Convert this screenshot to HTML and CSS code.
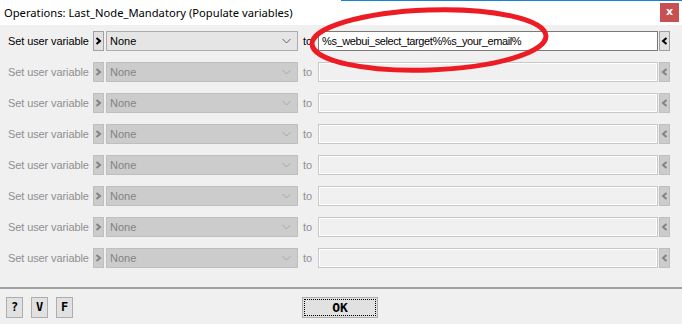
FILE: index.html
```html
<html>
	<head>
		<title>Operations: Last_Node_Mandatory</title>
<link rel="stylesheet" href="styles.css">
</head>
<body>
		<div id="WINDOW">
			<div class="titlebar">
				<span class="title">Operations: Last_Node_Mandatory (Populate variables)</span>
				<div class="close">x</div>
			</div>

			<div class="content">
				<div class="rows">
					<div class="row">
						<span class="label">Set user variable</span>
						<div class="btn-arrow"><svg width="7" height="8" viewBox="0 0 7 8"><polyline points="1.5,1 5,4 1.5,7" /></svg></div>
						<div class="combo"><span>None</span><svg class="chev" width="9" height="6" viewBox="0 0 9 6"><polyline points="0.5,1 4.5,5 8.5,1" /></svg></div>
						<span class="to">to</span>
						<div class="field">%s_webui_select_target%%s_your_email%</div>
						<div class="btn-back"><svg width="7" height="8" viewBox="0 0 7 8"><polyline points="5.5,1 2,4 5.5,7" /></svg></div>
					</div>
					<div class="row off">
						<span class="label">Set user variable</span>
						<div class="btn-arrow"><svg width="7" height="8" viewBox="0 0 7 8"><polyline points="1.5,1 5,4 1.5,7" /></svg></div>
						<div class="combo"><span>None</span><svg class="chev" width="9" height="6" viewBox="0 0 9 6"><polyline points="0.5,1 4.5,5 8.5,1" /></svg></div>
						<span class="to">to</span>
						<div class="field"></div>
						<div class="btn-back"><svg width="7" height="8" viewBox="0 0 7 8"><polyline points="5.5,1 2,4 5.5,7" /></svg></div>
					</div>
					<div class="row off">
						<span class="label">Set user variable</span>
						<div class="btn-arrow"><svg width="7" height="8" viewBox="0 0 7 8"><polyline points="1.5,1 5,4 1.5,7" /></svg></div>
						<div class="combo"><span>None</span><svg class="chev" width="9" height="6" viewBox="0 0 9 6"><polyline points="0.5,1 4.5,5 8.5,1" /></svg></div>
						<span class="to">to</span>
						<div class="field"></div>
						<div class="btn-back"><svg width="7" height="8" viewBox="0 0 7 8"><polyline points="5.5,1 2,4 5.5,7" /></svg></div>
					</div>
					<div class="row off">
						<span class="label">Set user variable</span>
						<div class="btn-arrow"><svg width="7" height="8" viewBox="0 0 7 8"><polyline points="1.5,1 5,4 1.5,7" /></svg></div>
						<div class="combo"><span>None</span><svg class="chev" width="9" height="6" viewBox="0 0 9 6"><polyline points="0.5,1 4.5,5 8.5,1" /></svg></div>
						<span class="to">to</span>
						<div class="field"></div>
						<div class="btn-back"><svg width="7" height="8" viewBox="0 0 7 8"><polyline points="5.5,1 2,4 5.5,7" /></svg></div>
					</div>
					<div class="row off">
						<span class="label">Set user variable</span>
						<div class="btn-arrow"><svg width="7" height="8" viewBox="0 0 7 8"><polyline points="1.5,1 5,4 1.5,7" /></svg></div>
						<div class="combo"><span>None</span><svg class="chev" width="9" height="6" viewBox="0 0 9 6"><polyline points="0.5,1 4.5,5 8.5,1" /></svg></div>
						<span class="to">to</span>
						<div class="field"></div>
						<div class="btn-back"><svg width="7" height="8" viewBox="0 0 7 8"><polyline points="5.5,1 2,4 5.5,7" /></svg></div>
					</div>
					<div class="row off">
						<span class="label">Set user variable</span>
						<div class="btn-arrow"><svg width="7" height="8" viewBox="0 0 7 8"><polyline points="1.5,1 5,4 1.5,7" /></svg></div>
						<div class="combo"><span>None</span><svg class="chev" width="9" height="6" viewBox="0 0 9 6"><polyline points="0.5,1 4.5,5 8.5,1" /></svg></div>
						<span class="to">to</span>
						<div class="field"></div>
						<div class="btn-back"><svg width="7" height="8" viewBox="0 0 7 8"><polyline points="5.5,1 2,4 5.5,7" /></svg></div>
					</div>
					<div class="row off">
						<span class="label">Set user variable</span>
						<div class="btn-arrow"><svg width="7" height="8" viewBox="0 0 7 8"><polyline points="1.5,1 5,4 1.5,7" /></svg></div>
						<div class="combo"><span>None</span><svg class="chev" width="9" height="6" viewBox="0 0 9 6"><polyline points="0.5,1 4.5,5 8.5,1" /></svg></div>
						<span class="to">to</span>
						<div class="field"></div>
						<div class="btn-back"><svg width="7" height="8" viewBox="0 0 7 8"><polyline points="5.5,1 2,4 5.5,7" /></svg></div>
					</div>
					<div class="row off">
						<span class="label">Set user variable</span>
						<div class="btn-arrow"><svg width="7" height="8" viewBox="0 0 7 8"><polyline points="1.5,1 5,4 1.5,7" /></svg></div>
						<div class="combo"><span>None</span><svg class="chev" width="9" height="6" viewBox="0 0 9 6"><polyline points="0.5,1 4.5,5 8.5,1" /></svg></div>
						<span class="to">to</span>
						<div class="field"></div>
						<div class="btn-back"><svg width="7" height="8" viewBox="0 0 7 8"><polyline points="5.5,1 2,4 5.5,7" /></svg></div>
					</div>
				</div>
			</div>

			<div class="separator"></div>

			<div class="footer">
				<div class="tools">
					<div class="btn-small">?</div>
					<div class="btn-small">V</div>
					<div class="btn-small">F</div>
				</div>
				<div class="btn-ok"><span>OK</span></div>
			</div>

			<!-- hand drawn red circle round the first field -->
			<svg class="scribble" width="682" height="90" viewBox="0 0 682 90">
				<ellipse cx="429" cy="40" rx="117" ry="30" transform="rotate(-2 429 40)" />
			</svg>
		</div>
	</body>
</html>
```

FILE: styles.css
```css
body{
	margin: 0;
	width: 682px;
	height: 324px;
	overflow: hidden;
	background: #f0f0f0;
	font-family: "Liberation Sans", Arial, sans-serif;
	font-size: 11px;
	color: #000;
}

#WINDOW{
	position: relative;
	width: 682px;
	height: 324px;
	background: #f0f0f0;
}

.titlebar{
	position: relative;
	height: 25px;
	background: #fff;
	display: flex;
	justify-content: space-between;
	align-items: flex-start;
}

.titlebar::before{
	content: "";
	position: absolute;
	top: 0;
	left: 341px;
	right: 0;
	height: 1px;
	background: #1883d7;
}

.title{
	font-family: "Noto Sans", "Open Sans", sans-serif;
	font-size: 11.2px;
	line-height: 12px;
	padding: 7px 0 0 4px;
	color: #000;
}

.close{
	width: 19px;
	height: 19px;
	margin: 3px 3px 0 0;
	background: #c75050;
	color: #fff;
	font-family: "DejaVu Sans", sans-serif;
	font-weight: bold;
	font-size: 11px;
	line-height: 17px;
	text-align: center;
}

.content{
	padding: 6px 0 0 8px;
}

.rows{
	display: flex;
	flex-direction: column;
	gap: 11px;
}

.row{
	display: flex;
	align-items: center;
	height: 20px;
}

.label{
	width: 85px;
	white-space: nowrap;
	letter-spacing: -0.1px;
}

.btn-arrow, .btn-back{
	box-sizing: border-box;
	width: 11px;
	height: 20px;
	background: #e1e1e1;
	border: 1px solid #a0a0a0;
	display: flex;
	align-items: center;
	justify-content: center;
}

.btn-arrow svg polyline, .btn-back svg polyline{
	fill: none;
	stroke: #000;
	stroke-width: 2;
}

.btn-arrow{
	margin-right: 2px;
}

.btn-back{
	width: 11px;
	margin-left: 1px;
}

.combo{
	box-sizing: border-box;
	width: 192px;
	height: 20px;
	background: #e5e5e5;
	border: 1px solid #acacac;
	display: flex;
	align-items: center;
	justify-content: space-between;
	padding: 0 6px 0 3px;
}

.chev polyline{
	fill: none;
	stroke: #606060;
	stroke-width: 1;
}

.to{
	width: 15px;
	padding-left: 5px;
}

.field{
	box-sizing: border-box;
	width: 340px;
	height: 20px;
	background: #fff;
	border: 1px solid #7a7a7a;
	padding: 3px 0 0 3px;
	white-space: nowrap;
	overflow: hidden;
	letter-spacing: -0.4px;
}

/* disabled rows */
.off .label, .off .to{
	color: #8f8f8f;
}

.off .btn-arrow, .off .btn-back{
	background: #cccccc;
	border-color: #bfbfbf;
}

.off .btn-arrow svg polyline, .off .btn-back svg polyline{
	stroke: #838383;
}

.off .combo{
	background: #cccccc;
	border-color: #bfbfbf;
	color: #838383;
}

.off .chev polyline{
	stroke: #a8a8a8;
}

.off .field{
	background: #f0f0f0;
	border: 1px solid #c8c8c8;
	box-shadow: inset 0 0 0 1px #fff;
}

.separator{
	margin-top: 19px;
	height: 2px;
	background: #a0a0a0;
}

.footer{
	display: flex;
	align-items: flex-start;
	padding: 8px 0 0 6px;
}

.tools{
	display: flex;
	gap: 8px;
	width: 296px;
}

.btn-small{
	box-sizing: border-box;
	width: 17px;
	height: 21px;
	background: #e1e1e1;
	border: 1px solid #adadad;
	font-family: "DejaVu Sans Mono", monospace;
	font-weight: bold;
	font-size: 12px;
	line-height: 19px;
	text-align: center;
}

.btn-ok{
	box-sizing: border-box;
	width: 76px;
	height: 21px;
	background: #e1e1e1;
	border: 1px solid #adadad;
	padding: 1px;
}

.btn-ok span{
	display: block;
	box-sizing: border-box;
	height: 17px;
	border: 1px dotted #000;
	font-family: "DejaVu Sans Mono", monospace;
	font-weight: bold;
	font-size: 13px;
	line-height: 15px;
	text-align: center;
}

.scribble{
	position: absolute;
	top: 0;
	left: 0;
	pointer-events: none;
}

.scribble ellipse{
	fill: none;
	stroke: #ed1c24;
	stroke-width: 5;
}
```
